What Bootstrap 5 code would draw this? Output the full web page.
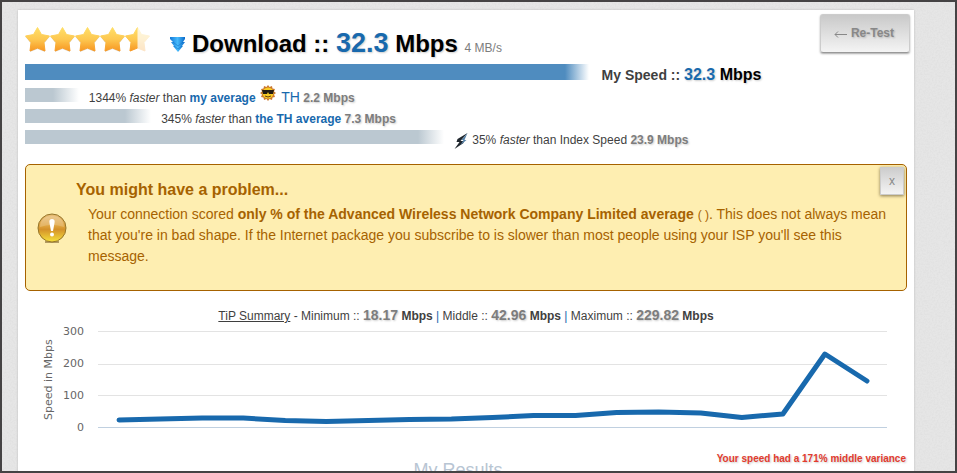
<!DOCTYPE html>
<html lang="en">
<head>
<meta charset="utf-8">
<meta name="viewport" content="width=device-width, initial-scale=1">
<title>Download speed results</title>
<link href="https://cdn.jsdelivr.net/npm/bootstrap@5.3.0/dist/css/bootstrap.min.css" rel="stylesheet">
<style>
body { font-family: "Liberation Sans", Arial, sans-serif; font-size: 12px; line-height: 16px; color: #3f3f3f; background: #e6e6e6; }
a { color: #1869ad; text-decoration: none; }
.page-frame { padding: 8px 41px 0 16px; border: 2px solid #454344; overflow: auto; scrollbar-width: none;
  background: #e6e6e6 url("data:image/svg+xml,%3Csvg xmlns='http://www.w3.org/2000/svg' width='120' height='120'%3E%3Cfilter id='n'%3E%3CfeTurbulence type='fractalNoise' baseFrequency='.6' numOctaves='2' stitchTiles='stitch'/%3E%3CfeColorMatrix values='0 0 0 0 .4 0 0 0 0 .4 0 0 0 0 .4 .2 0 0 0 -.07'/%3E%3C/filter%3E%3Crect width='120' height='120' filter='url(%23n)'/%3E%3C/svg%3E"); }
.page-frame::-webkit-scrollbar { display: none; }
.sheet { background: #fff; padding: 0 7px; box-shadow: 0 0 2px #bbb; min-height: 100%; }
.soft { text-shadow: 1px 1px 2px rgba(0,0,0,.2); }
.blue { color: #1869ad; }
.grey { color: #7d7d7d; }
.headline { height: 54px; padding-top: 17px; gap: 19px; }
.title { font-size: 24px; line-height: 32px; font-weight: 700; color: #000; }
.title .speed-value { font-size: 27px; }
.title .rate { font-size: 12px; font-weight: 400; text-shadow: none; }
.retest { font-size: 12px; font-weight: 700; color: #888; padding: 7px 15px 8px 13px; border: 1px solid #ccc; border-bottom-color: #999; border-radius: 3px; background: linear-gradient(#c9c9c9, #f4f4f4); margin: 4px -3px 0 0; box-shadow: 0 1px 2px #aaa; line-height: 22px; }
.meter-row { height: 21px; gap: 10px; }
.meter-row.main { height: 24px; gap: 13px; }
.meter { height: 14px; background: linear-gradient(90deg, #bbc8d1 calc(100% - 26px), #fff); }
.main .meter { height: 16px; background: linear-gradient(90deg, #4f8cbf calc(100% - 24px), #fff); }
.meter-text { line-height: 20px; white-space: nowrap; }
.main .meter-text { font-size: 14px; line-height: 22px; font-weight: 700; }
.main .meter-text .value { font-size: 16px; color: #000; }
.face { margin: -9px 2px 0 1px; vertical-align: -1px; }
.tag { font-size: 14px; line-height: 14px; }
.notice { margin-top: 13px; min-height: 127px; padding: 15px 11px 14px; border: 1px solid #a66200; border-radius: 5px; background: #feeeb1; color: #a66200; gap: 9px; }
.notice h2 { font-size: 16px; line-height: 20px; font-weight: 700; margin-bottom: 4px; }
.notice p { font-size: 14px; line-height: 21px; margin: 0; padding: 0 4px 0 12px; }
.notice .paren { font-size: 12px; line-height: 12px; }
.badge-icon { margin-top: 33px; }
.dismiss { top: 2px; right: 2px; width: 24px; height: 28px; padding: 0; border: 1px solid #ccc; background: linear-gradient(#cdcdcd, #f4f4f4); color: #888; font-size: 12px; line-height: 24px; box-shadow: 0 1px 3px #8a7a50; }
.summary { margin-top: 16px; line-height: 18px; }
.summary a { color: #3f3f3f; text-decoration: underline; }
.summary .amount { font-size: 14px; line-height: 14px; }
.chart { font-family: "DejaVu Sans", sans-serif; font-size: 11px; color: #666; padding: 6px 20px 0 17px; }
.axis-title { writing-mode: vertical-rl; transform: rotate(180deg); line-height: 14px; width: 14px; height: 98px; text-align: center; }
.ticks { width: 28px; height: 112px; margin: -7px 14px 0 0; text-align: right; line-height: 16px; }
.plot { height: 112px; min-width: 0; }
.variance { font-size: 10px; line-height: 14px; font-weight: 700; color: #e23b2e; margin-top: 9px; padding-right: 1px; text-shadow: 1px 1px 2px #ccc; }
.results-title { font-size: 18px; line-height: 22px; color: #b8c5d3; margin: -7px 16px 20px 0; }
</style>
<script src="https://cdn.jsdelivr.net/npm/bootstrap@5.3.0/dist/js/bootstrap.bundle.min.js"></script>
</head>
<body>
<div class="page-frame vh-100">
<main class="sheet">
  <header class="d-flex justify-content-between position-relative">
    <div class="headline d-flex">
      <svg width="126" height="26" viewBox="0 0 126 26" role="img" aria-label="4.5 of 5 stars">
        <defs>
          <linearGradient id="gold" x2="0" y2="1"><stop stop-color="#ffdf68"/><stop offset=".5" stop-color="#fdc851"/><stop offset="1" stop-color="#f79722"/></linearGradient>
          <path id="star" d="M12.500 .5L16.500 7.500L24.500 9L19 15.500L20 24L12.500 21L5 24L6 15.500L.5 9L8.500 7.500Z" stroke-width="1" stroke-linejoin="round"/>
          <clipPath id="half"><path d="M0 0H12.500V26H0Z"/></clipPath>
        </defs>
        <g fill="#bcb6a8" opacity=".5"><use href="#star" y="1"/><use href="#star" x="25" y="1"/><use href="#star" x="50" y="1"/><use href="#star" x="75" y="1"/></g>
        <g fill="url(#gold)" stroke="url(#gold)"><use href="#star"/><use href="#star" x="25"/><use href="#star" x="50"/><use href="#star" x="75"/><use href="#star" x="100" opacity=".25"/><g transform="translate(100)"><use href="#star" clip-path="url(#half)"/></g></g>
      </svg>
      <div class="d-flex gap-1">
        <svg class="mt-2" width="18" height="20" viewBox="0 0 18 20" aria-hidden="true">
          <defs><linearGradient id="sky"><stop stop-color="#1479d8"/><stop offset=".5" stop-color="#45b9fb"/><stop offset="1" stop-color="#0a69c9"/></linearGradient></defs>
          <path d="M0 2H15V4L13 7H15L12 11H13L8 17L3 11H4L1 7H3L0 4Z" fill="url(#sky)"/><path d="M3 7l5 4 5-4M4 11l4 3 4-3" fill="none" stroke="#0b5cb0" opacity=".4"/>
        </svg>
        <h1 class="title soft m-0">Download :: <span class="speed-value blue">32.3</span> Mbps <span class="rate grey">4 MB/s</span></h1>
      </div>
    </div>
    <button type="button" class="retest btn soft align-self-start"><svg width="13" height="10" viewBox="0 0 13 10" class="me-1" aria-hidden="true"><path d="M13 5.500H1M4 2.500L1 5.500L4 8.500" fill="none" stroke="#888"/></svg>Re-Test</button>
  </header>

  <section aria-label="Speed comparison">
    <div class="meter-row main d-flex">
      <div class="meter" style="width:63.9%"></div>
      <div class="meter-text">My Speed :: <span class="value soft"><span class="blue">32.3</span> Mbps</span></div>
    </div>
    <div class="meter-row d-flex">
      <div class="meter" style="width:6.1%"></div>
      <div class="meter-text">1344% <i>faster</i> than <a href="#"><b>my average</b></a>
        <svg width="16" height="16" viewBox="0 0 16 16" class="face align-text-bottom mb-1" aria-hidden="true"><path d="M8 0l1.500 2L12 1l.5 2.500L15 4l-1 2.500L16 8l-2 1.500 1 2.500-2.500.5L12 15l-2.500-1L8 16l-1.500-2L4 15l-.5-2.500L1 12l1-2.500L0 8l2-1.500L1 4l2.500-.5L4 1l2.500 1Z" fill="#cb782e"/><circle cx="8" cy="8" r="5.500" fill="#f8cb24"/><path d="M2 5h12l-1 4H9L8 7 7 9H3Z" fill="#221a12"/><path d="M5 11q3 2 6 0" fill="none" stroke="#6b3f10"/></svg>
        <a href="#" class="tag">TH</a> <b class="grey soft">2.2 Mbps</b></div>
    </div>
    <div class="meter-row d-flex">
      <div class="meter" style="width:14.3%"></div>
      <div class="meter-text">345% <i>faster</i> than <a href="#"><b>the TH average</b></a> <b class="grey soft">7.3 Mbps</b></div>
    </div>
    <div class="meter-row d-flex">
      <div class="meter" style="width:47.500%"></div>
      <div class="meter-text"><svg width="15" height="16" viewBox="0 0 14 16" class="align-middle" aria-hidden="true"><path d="M13 0L3 6L2 9H5L0 16L9 10V8H6Z" fill="#20272e"/><path d="M13 0L7 7H9L6 12L12 7H10Z" fill="#5783a9"/></svg> 35% <i>faster</i> than Index Speed <b class="grey soft">23.9 Mbps</b></div>
    </div>
  </section>

  <section class="notice d-flex position-relative">
    <svg class="badge-icon flex-shrink-0" width="30" height="31" viewBox="0 0 30 31" aria-hidden="true">
      <defs><linearGradient id="amber" x2="0" y2="1"><stop stop-color="#e9c07c"/><stop offset=".45" stop-color="#dda03a"/><stop offset=".55" stop-color="#d4912a"/><stop offset="1" stop-color="#f6e23c"/></linearGradient></defs>
      <path d="M8 29h14" stroke="#b19a62" stroke-width="2"/>
      <circle cx="15" cy="15" r="14" fill="url(#amber)" stroke="#96752a"/>
      <path d="M3 14C3 6 9 3 15 3s12 3 12 11q-12-4-24 0Z" fill="#fff" opacity=".2"/>
      <path d="M15 6c2 0 3 1 2.500 4L16 18h-2l-1.500-8C12 7 13 6 15 6Z" fill="#fff"/><circle cx="15" cy="21.500" r="2" fill="#fff"/>
    </svg>
    <div>
      <h2>You might have a problem...</h2>
      <p>Your connection scored <b>only % of the Advanced Wireless Network Company Limited average</b> <span class="paren">( )</span>. This does not always mean that you're in bad shape. If the Internet package you subscribe to is slower than most people using your ISP you'll see this message.</p>
    </div>
    <button type="button" class="dismiss position-absolute" aria-label="Dismiss">x</button>
  </section>

  <div class="summary text-center"><a href="#">TiP Summary</a> - Minimum :: <b class="amount grey soft">18.17</b> <b>Mbps</b> <span class="blue">|</span> Middle :: <b class="amount grey soft">42.96</b> <b>Mbps</b> <span class="blue">|</span> Maximum :: <b class="amount grey soft">229.82</b> <b>Mbps</b></div>

  <div class="chart d-flex">
    <div class="axis-title">Speed in Mbps</div>
    <div class="ticks d-flex flex-column justify-content-between"><span>300</span><span>200</span><span>100</span><span>0</span></div>
    <svg class="plot flex-grow-1" viewBox="0 0 788 112" preserveAspectRatio="none" role="img" aria-label="Speed over the test">
      <g stroke="#e3e3e3" shape-rendering="crispEdges"><path d="M0 .5H788M0 33.500H788M0 64.500H788"/><path d="M0 96.500H788" stroke="#c0d0e0"/></g>
      <polyline fill="none" stroke="#1869ad" stroke-width="5" stroke-linecap="round" stroke-linejoin="round" points="21,89 62,88 104,87 145,87 187,89.500 228,90.500 270,89.500 311,88.500 353,88 394,86.500 435,84.500 477,84.500 518,81.500 560,81 602,82 643,86.500 684,83 726,23 768,50"/>
    </svg>
  </div>
  <div class="variance text-end">Your speed had a 171% middle variance</div>
  <h3 class="results-title text-center fw-normal">My Results</h3>
</main>
</div>
</body>
</html>
